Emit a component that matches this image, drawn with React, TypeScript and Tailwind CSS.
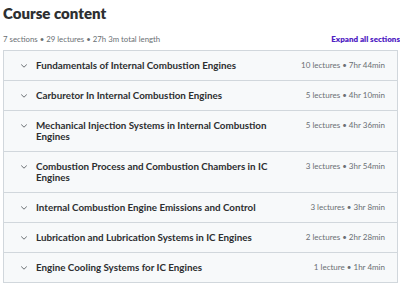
import React from "react";

const sections = [
  { title: "Fundamentals of Internal Combustion Engines", meta: "10 lectures • 7hr 44min" },
  { title: "Carburetor In Internal Combustion Engines", meta: "5 lectures • 4hr 10min" },
  { title: "Mechanical Injection Systems in Internal Combustion Engines", meta: "5 lectures • 4hr 36min" },
  { title: "Combustion Process and Combustion Chambers in IC Engines", meta: "3 lectures • 3hr 54min" },
  { title: "Internal Combustion Engine Emissions and Control", meta: "3 lectures • 3hr 8min" },
  { title: "Lubrication and Lubrication Systems in IC Engines", meta: "2 lectures • 2hr 28min" },
  { title: "Engine Cooling Systems for IC Engines", meta: "1 lecture • 1hr 4min" },
];

function Chevron() {
  return (
    <svg width="8" height="8" viewBox="0 0 8 8" className="shrink-0 mt-[2px]">
      <path d="M1.5 2.8 L4 5.2 L6.5 2.8" fill="none" stroke="#6a6f73" strokeWidth="1" strokeLinecap="round" strokeLinejoin="round" />
    </svg>
  );
}

export default function App() {
  return (
    <div className="w-[400px] h-[283px] overflow-hidden bg-white pl-[3px] pr-[2px] text-[#2d2f31]" style={{ fontFamily: "Lato, 'Noto Sans', sans-serif" }}>
      <h2 className="pt-[3px] text-[15px] leading-[20px] font-extrabold">Course content</h2>
      <div className="mt-[10px] flex items-center justify-between">
        <span className="text-[7.8px] leading-[12px] text-[#6a6f73]">7 sections • 29 lectures • 27h 3m total length</span>
        <span className="text-[8px] leading-[12px] font-extrabold text-[#5022c3] mr-[-2px]">Expand all sections</span>
      </div>
      <div className="mt-[5px] border border-[#d1d7dc] border-b-0">
        {sections.map((s, i) => (
          <div key={i} className="flex items-start bg-[#f7f9fa] border-b border-[#d1d7dc] pl-[16px] pr-[12px] py-[9px]">
            <Chevron />
            <div className="ml-[8px] flex-1 text-[9.8px] leading-[11px] font-bold pr-[24px]">{s.title}</div>
            <div className="shrink-0 text-[8px] leading-[11px] text-[#6a6f73]">{s.meta}</div>
          </div>
        ))}
      </div>
    </div>
  );
}
